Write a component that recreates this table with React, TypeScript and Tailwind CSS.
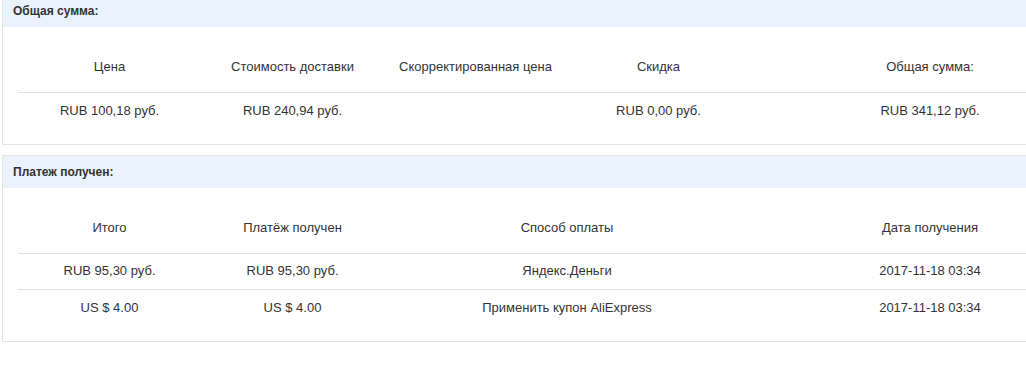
import React from "react";

const font = { fontFamily: '"Liberation Sans", Arial, sans-serif' };

function Box({
  title,
  widths,
  headers,
  rows,
  className,
}: {
  title: string;
  widths: number[];
  headers: string[];
  rows: string[][];
  className?: string;
}) {
  const total = widths.reduce((a, b) => a + b, 0);
  return (
    <div className={"ml-[2px] w-[1100px] border border-[#e3e3e3] bg-white " + (className ?? "")}>
      <div className="h-[32px] bg-[#eaf2fd] pl-[10px] flex items-center text-[12px] font-bold text-[#333]">
        {title}
      </div>
      <div className="pl-[15px] pt-[15px] pb-[16px]">
        <table className="border-collapse text-[13px] text-[#333]" style={{ tableLayout: "fixed", width: total }}>
          <colgroup>
            {widths.map((w, i) => (
              <col key={i} style={{ width: w }} />
            ))}
          </colgroup>
          <thead>
            <tr className="h-[50px]">
              {headers.map((h, i) => (
                <th key={i} className="font-normal text-center align-middle p-0">
                  {h}
                </th>
              ))}
            </tr>
          </thead>
          <tbody>
            {rows.map((r, ri) => (
              <tr key={ri} className="h-[36px] border-t border-[#e2e2e2]">
                {r.map((c, ci) => (
                  <td key={ci} className="text-center align-middle p-0">
                    {c}
                  </td>
                ))}
              </tr>
            ))}
          </tbody>
        </table>
      </div>
    </div>
  );
}

export default function App() {
  return (
    <div className="w-[1026px] h-[384px] overflow-hidden bg-white" style={font}>
      <div className="-mt-[6px]">
        <Box
          title="Общая сумма:"
          widths={[183, 183, 183, 183, 360]}
          headers={["Цена", "Стоимость доставки", "Скорректированная цена", "Скидка", "Общая сумма:"]}
          rows={[["RUB 100,18 руб.", "RUB 240,94 руб.", "", "RUB 0,00 руб.", "RUB 341,12 руб."]]}
        />
        <Box
          className="mt-[10px]"
          title="Платеж получен:"
          widths={[183, 183, 366, 360]}
          headers={["Итого", "Платёж получен", "Способ оплаты", "Дата получения"]}
          rows={[
            ["RUB 95,30 руб.", "RUB 95,30 руб.", "Яндекс.Деньги", "2017-11-18 03:34"],
            ["US $ 4.00", "US $ 4.00", "Применить купон AliExpress", "2017-11-18 03:34"],
          ]}
        />
      </div>
    </div>
  );
}
